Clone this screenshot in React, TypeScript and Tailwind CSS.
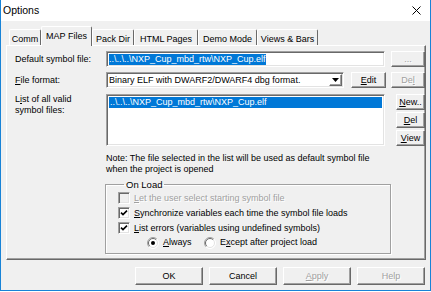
import type { ReactNode } from 'react';

const raised =
    'border border-t-white border-l-white border-r-[#696969] border-b-[#696969] shadow-[inset_-1px_-1px_0_#a0a0a0]';
const sunken =
    'border border-t-[#a0a0a0] border-l-[#a0a0a0] border-r-white border-b-white shadow-[inset_1px_1px_0_#696969,inset_-1px_-1px_0_#e3e3e3]';
const greyText = 'text-[#a0a0a0] [text-shadow:1px_1px_0_#fff]';

function Btn({ children, className = '', disabled = false }: { children: ReactNode; className?: string; disabled?: boolean }) {
    return (
        <div className={`flex items-center justify-center bg-[#f0f0f0] ${raised} ${disabled ? greyText : 'text-black'} ${className}`}>
            {children}
        </div>
    );
}

function Check({ checked = false, disabled = false }: { checked?: boolean; disabled?: boolean }) {
    return (
        <div className={`flex h-[12px] w-[12px] shrink-0 items-center justify-center ${sunken} ${disabled ? 'bg-[#f0f0f0]' : 'bg-white'}`}>
            {checked && (
                <svg width="8" height="8" viewBox="0 0 8 8">
                    <path d="M1 3.6 L3 5.6 L7 1.6" stroke="#000" strokeWidth={1.6} fill="none" />
                </svg>
            )}
        </div>
    );
}

function Radio({ checked = false }: { checked?: boolean }) {
    return (
        <svg width="12" height="12" viewBox="0 0 12 12" className="shrink-0">
            <circle cx="6" cy="6" r="5.5" fill="#fff" />
            <path d="M2.1 9.9 A5.5 5.5 0 0 1 9.9 2.1" stroke="#a0a0a0" fill="none" />
            <path d="M2.8 9.2 A4.5 4.5 0 0 1 9.2 2.8" stroke="#696969" fill="none" />
            <path d="M9.9 2.1 A5.5 5.5 0 0 1 2.1 9.9" stroke="#ffffff" fill="none" />
            <path d="M9.2 2.8 A4.5 4.5 0 0 1 2.8 9.2" stroke="#e3e3e3" fill="none" />
            {checked && <circle cx="6" cy="6" r="2" fill="#000" />}
        </svg>
    );
}

const tabs = [
    { label: 'Comm', w: 'w-[32px]' },
    { label: 'MAP Files', w: 'w-[51px]', active: true },
    { label: 'Pack Dir', w: 'w-[42px]' },
    { label: 'HTML Pages', w: 'w-[64px]' },
    { label: 'Demo Mode', w: 'w-[59px]' },
    { label: 'Views & Bars', w: 'w-[61px]' },
];

export default function App() {
    return (
        <div className="flex h-[291px] w-[431px] flex-col border-x border-b border-[#1883d7] bg-[#f0f0f0] font-['Liberation_Sans',Arial,sans-serif] text-[9px] leading-[11px] text-black">
            <div className="flex h-[21px] items-center justify-between bg-white pl-[2px] pr-[9px]">
                <span className="text-[10.5px] leading-[13px]">Options</span>
                <svg width="9" height="9" viewBox="0 0 9 9">
                    <path d="M0.5 0.5 L8.5 8.5 M8.5 0.5 L0.5 8.5" stroke="#000" strokeWidth={1} />
                </svg>
            </div>

            <div className="flex flex-col pl-[5px] pr-[4px] pt-[5px]">
                <div className="flex h-[19px] items-end pl-[3px]">
                    {tabs.map((tab) =>
                        tab.active ? (
                            <div
                                key={tab.label}
                                className={`relative z-10 -mb-[1px] flex h-[20px] ${tab.w} justify-center rounded-t-[2px] border-l border-r border-t border-l-white border-r-[#696969] border-t-white bg-[#f0f0f0] pt-[4px]`}
                            >
                                {tab.label}
                            </div>
                        ) : (
                            <div
                                key={tab.label}
                                className={`flex h-[16px] ${tab.w} justify-center rounded-t-[2px] border-l border-r border-t border-l-white border-r-[#696969] border-t-white pt-[4px]`}
                            >
                                {tab.label}
                            </div>
                        )
                    )}
                </div>

                <div className={`flex h-[215px] w-[420px] flex-col pl-[8px] pt-[5px] ${raised}`}>
                    <div className="flex items-center">
                        <div className="w-[91px]">Default symbol file:</div>
                        <div className={`flex h-[16px] w-[279px] items-center bg-white px-[2px] ${sunken}`}>
                            <span className="bg-[#0078d7] text-white">..\..\..\NXP_Cup_mbd_rtw\NXP_Cup.elf</span>
                        </div>
                        <Btn disabled className="ml-[6px] h-[16px] w-[34px]">
                            ...
                        </Btn>
                    </div>

                    <div className="mt-[5px] flex items-center">
                        <div className="w-[91px]">
                            <span className="underline underline-offset-[1px]">F</span>ile format:
                        </div>
                        <div className={`flex h-[16px] w-[238px] items-center bg-white pl-[2px] ${sunken}`}>
                            <span className="flex-1">Binary ELF with DWARF2/DWARF4 dbg format.</span>
                            <div className={`mr-[1px] flex h-[12px] w-[13px] items-center justify-center ${raised}`}>
                                <svg width="7" height="4" viewBox="0 0 7 4">
                                    <path d="M0 0 H7 L3.5 4 Z" fill="#000" />
                                </svg>
                            </div>
                        </div>
                        <Btn className="ml-[7px] h-[16px] w-[35px]">
                            <span className="underline underline-offset-[1px]">E</span>dit
                        </Btn>
                        <Btn disabled className="ml-[5px] h-[16px] w-[34px]">
                            De<span className="underline underline-offset-[1px]">l</span>
                        </Btn>
                    </div>

                    <div className="mt-[6px] flex items-start">
                        <div className="w-[91px]">
                            L<span className="underline underline-offset-[1px]">i</span>st of all valid
                            <br />
                            symbol files:
                        </div>
                        <div className={`h-[52px] w-[279px] bg-white p-[2px] ${sunken}`}>
                            <div className="bg-[#0078d7] px-[1px] text-white">..\..\..\NXP_Cup_mbd_rtw\NXP_Cup.elf</div>
                        </div>
                        <div className="ml-[11px] flex flex-col gap-[2px]">
                            <Btn className="h-[16px] w-[29px]">
                                <span className="underline underline-offset-[1px]">N</span>ew..
                            </Btn>
                            <Btn className="h-[16px] w-[29px]">
                                <span className="underline underline-offset-[1px]">D</span>el
                            </Btn>
                            <Btn className="h-[16px] w-[29px]">
                                <span className="underline underline-offset-[1px]">V</span>iew
                            </Btn>
                        </div>
                    </div>

                    <div className="mt-[7px] pl-[91px]">
                        Note: The file selected in the list will be used as default symbol file
                        <br />
                        when the project is opened
                    </div>

                    <fieldset className="ml-[90px] mt-[4px] w-[286px] border border-[#a0a0a0] pb-[5px] pl-[12px] shadow-[1px_1px_0_#fff,inset_1px_1px_0_#fff]">
                        <legend className="ml-[6px] px-[2px] text-[9.5px]">On Load</legend>
                        <div className="flex flex-col gap-[3px] pt-[2px]">
                            <div className="flex items-center gap-[4px]">
                                <Check disabled />
                                <span className={greyText}>
                                    <span className="underline underline-offset-[1px]">L</span>et the user select starting symbol file
                                </span>
                            </div>
                            <div className="flex items-center gap-[4px]">
                                <Check checked />
                                <span>
                                    <span className="underline underline-offset-[1px]">S</span>ynchronize variables each time the symbol file loads
                                </span>
                            </div>
                            <div className="flex items-center gap-[4px]">
                                <Check checked />
                                <span>
                                    <span className="underline underline-offset-[1px]">L</span>ist errors (variables using undefined symbols)
                                </span>
                            </div>
                            <div className="flex h-[11px] items-center pl-[29px]">
                                <Radio checked />
                                <span className="ml-[4px] w-[41px]">
                                    <span className="underline underline-offset-[1px]">A</span>lways
                                </span>
                                <Radio />
                                <span className="ml-[4px]">
                                    E<span className="underline underline-offset-[1px]">x</span>cept after project load
                                </span>
                            </div>
                        </div>
                    </fieldset>
                </div>
            </div>

            <div className="mt-[7px] flex justify-end gap-[6px] pr-[5px]">
                <Btn className="h-[18px] w-[68px]">OK</Btn>
                <Btn className="h-[18px] w-[68px]">Cancel</Btn>
                <Btn disabled className="h-[18px] w-[68px]">
                    <span className="underline underline-offset-[1px]">A</span>pply
                </Btn>
                <Btn disabled className="h-[18px] w-[68px]">
                    Help
                </Btn>
            </div>
        </div>
    );
}
